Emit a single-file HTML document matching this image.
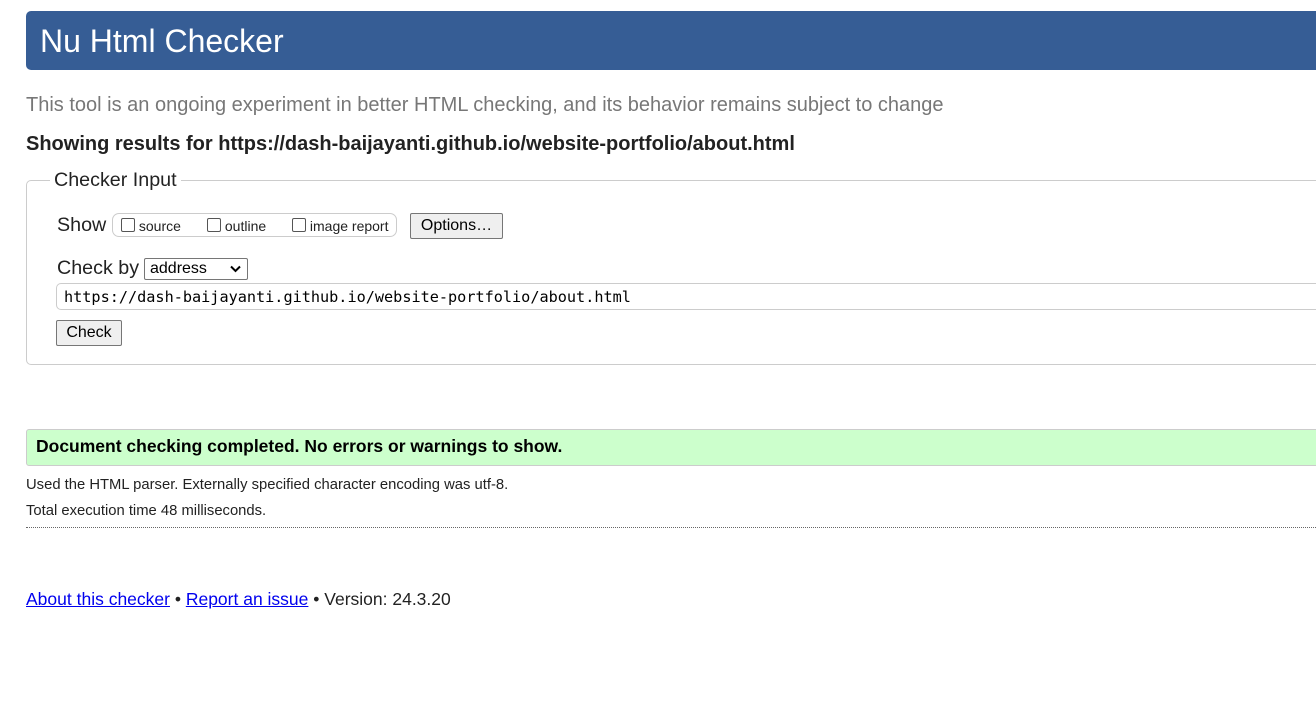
<!DOCTYPE html>
<html><head><meta charset="utf-8"><style>
body{margin:0;width:1316px;height:722px;background:#fff;font-family:"Liberation Sans",Arial,sans-serif;color:#222;position:relative;overflow:hidden}
.a{position:absolute;white-space:nowrap}
.hdr{left:26px;top:11px;width:1310px;height:59px;background:#365d95;border-radius:5px}
.cb{display:inline-block;width:12px;height:12px;border:1px solid #555;border-radius:2px;vertical-align:-1px;background:#fff}
.btn{background:#efefef;border:1px solid #767676;border-radius:2px;font-size:16px;color:#000;text-align:center;box-sizing:border-box}
a{color:#00e}
</style></head><body>
<div class="a hdr"></div>
<div class="a" style="left:40px;top:22px;font-size:32px;color:#fff;line-height:38px">Nu Html Checker</div>
<div class="a" style="left:26px;top:94px;font-size:20px;color:#777;line-height:22px">This tool is an ongoing experiment in better HTML checking, and its behavior remains subject to change</div>
<div class="a" style="left:26px;top:133px;font-size:20px;font-weight:bold;line-height:22px">Showing results for https://dash-baijayanti.github.io/website-portfolio/about.html</div>
<div class="a" style="left:26px;top:180px;width:1310px;height:185px;border:1px solid #ccc;border-radius:5px;box-sizing:border-box"></div>
<div class="a" style="left:50px;top:169px;padding:0 4px;background:#fff;font-size:19.7px;line-height:22px">Checker Input</div>
<div class="a" style="left:57px;top:214px;font-size:19.7px;line-height:22px">Show</div>
<div class="a" style="left:112px;top:213px;width:285px;height:24px;border:1px solid #ccc;border-radius:7px;box-sizing:border-box"></div>
<div class="a" style="left:121px;top:216px;font-size:14px;line-height:20px"><span class="cb"></span> source</div>
<div class="a" style="left:207px;top:216px;font-size:14px;line-height:20px"><span class="cb"></span> outline</div>
<div class="a" style="left:292px;top:216px;font-size:14px;line-height:20px"><span class="cb"></span> image report</div>
<div class="a btn" style="left:410px;top:213px;width:93px;height:26px;line-height:24px">Options…</div>
<div class="a" style="left:57px;top:257px;font-size:19.7px;line-height:22px">Check by</div>
<div class="a" style="left:144px;top:258px;width:104px;height:22px;border:1px solid #767676;border-radius:2px;box-sizing:border-box;font-size:16px;line-height:20px;padding-left:5px;color:#000">address<svg style="position:absolute;right:6px;top:6px" width="11" height="8" viewBox="0 0 11 8"><path d="M1 1.5L5.5 6L10 1.5" stroke="#000" stroke-width="2" fill="none"/></svg></div>
<div class="a" style="left:56px;top:283px;width:1280px;height:27px;border:1px solid #ccc;border-radius:5px;box-sizing:border-box;font-family:'DejaVu Sans Mono','Liberation Mono',monospace;font-size:15.2px;line-height:26px;padding-left:7px;color:#000">https://dash-baijayanti.github.io/website-portfolio/about.html</div>
<div class="a btn" style="left:56px;top:320px;width:66px;height:26px;line-height:24px">Check</div>
<div class="a" style="left:26px;top:429px;width:1310px;height:37px;background:#ccffcc;border:1px solid #ccc;border-radius:3px;box-sizing:border-box"></div>
<div class="a" style="left:36px;top:436px;font-size:17.5px;font-weight:bold;line-height:20px;color:#000">Document checking completed. No errors or warnings to show.</div>
<div class="a" style="left:26px;top:477px;font-size:14.8px;line-height:17px">Used the HTML parser. Externally specified character encoding was utf-8.</div>
<div class="a" style="left:26px;top:503px;font-size:14.8px;line-height:17px">Total execution time 48 milliseconds.</div>
<div class="a" style="left:26px;top:527px;width:1290px;border-top:1px dotted #666"></div>
<div class="a" style="left:26px;top:589px;font-size:17.5px;line-height:20px"><a href="#">About this checker</a> • <a href="#">Report an issue</a> • Version: 24.3.20</div>
</body></html>
